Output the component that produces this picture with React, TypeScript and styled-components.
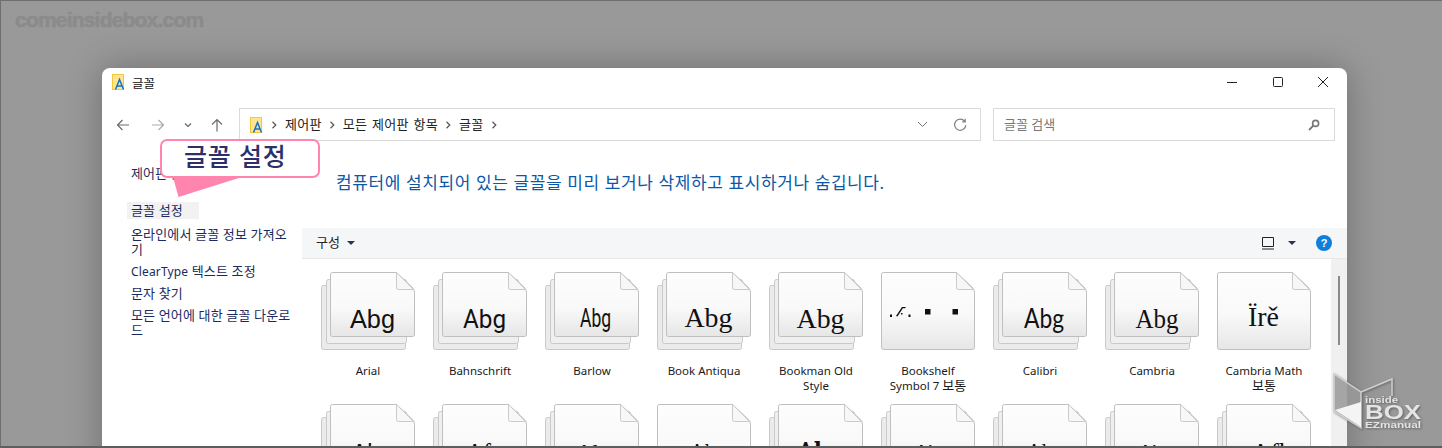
import React from 'react';
import styled, { createGlobalStyle } from 'styled-components';

const UI_FONT = `"Noto Sans", "Noto Sans CJK KR", sans-serif`;

const GlobalStyle = createGlobalStyle`
  html, body {
    margin: 0;
    padding: 0;
    background: #999;
  }
  * {
    box-sizing: border-box;
  }
`;

type Sample = {
  text: string;
  font: string;
  size: number;
  width: number;
  baseline?: number;
  center?: number;
  weight?: number;
};

type FontItem = {
  label?: string;
  stacked: boolean;
  sample: Sample | null;
};

const ARIAL = '"Liberation Sans", sans-serif';
const SERIF = '"Liberation Serif", serif';
const LIGHT = 'Roboto, sans-serif';
const DEJA_SERIF = '"DejaVu Serif", serif';
const CARLITO = 'Lato, sans-serif';

const fonts: FontItem[] = [
  { label: 'Arial', stacked: true, sample: { text: 'Abg', font: ARIAL, size: 26, width: 45 } },
  { label: 'Bahnschrift', stacked: true, sample: { text: 'Abg', font: LIGHT, size: 26, width: 43 } },
  { label: 'Barlow', stacked: true, sample: { text: 'Abg', font: LIGHT, size: 25, width: 31, center: 50.5, baseline: 55 } },
  { label: 'Book Antiqua', stacked: true, sample: { text: 'Abg', font: SERIF, size: 28, width: 48, baseline: 55 } },
  { label: 'Bookman Old Style', stacked: true, sample: { text: 'Abg', font: SERIF, size: 27, width: 48 } },
  { label: 'Bookshelf Symbol 7 보통', stacked: false, sample: null },
  { label: 'Calibri', stacked: true, sample: { text: 'Abg', font: CARLITO, size: 26, width: 40, center: 51 } },
  { label: 'Cambria', stacked: true, sample: { text: 'Abg', font: SERIF, size: 27, width: 43, center: 52 } },
  { label: 'Cambria Math 보통', stacked: false, sample: { text: 'Ïrě', font: SERIF, size: 28, width: 31, center: 46.5, baseline: 54 } },
  { stacked: true, sample: { text: 'Abg', font: ARIAL, size: 25, width: 42, baseline: 58 } },
  { stacked: true, sample: { text: 'Afg', font: SERIF, size: 25, width: 36, baseline: 57 } },
  { stacked: true, sample: { text: 'Abg', font: SERIF, size: 25, width: 42, baseline: 58 } },
  { stacked: false, sample: { text: 'Al', font: SERIF, size: 26, width: 20, baseline: 57, center: 43 } },
  { stacked: true, sample: { text: 'Abg', font: DEJA_SERIF, size: 25, width: 46, baseline: 56, weight: 700 } },
  { stacked: true, sample: { text: 'Abg', font: ARIAL, size: 24, width: 36, baseline: 58 } },
  { stacked: true, sample: { text: 'Al', font: SERIF, size: 26, width: 20, baseline: 57, center: 44 } },
  { stacked: true, sample: { text: 'Abg', font: ARIAL, size: 24, width: 36, baseline: 58 } },
  { stacked: true, sample: { text: 'Aʃl', font: SERIF, size: 27, width: 34, baseline: 58 } },
];

const Sheet: React.FC<{ x: number; y: number; w: number; h: number; fill: string }> = ({ x, y, w, h, fill }) => {
  const right = x + w;
  const bottom = y + h;
  const foldX = right - 18;
  const foldY = y + 17;
  return (
    <>
      <path
        d={`M${x + 2} ${y}H${foldX}L${right - 2} ${foldY - 2}Q${right} ${foldY} ${right} ${foldY + 3}V${bottom - 2}Q${right} ${bottom} ${right - 2} ${bottom}H${x + 2}Q${x} ${bottom} ${x} ${bottom - 2}V${y + 2}Q${x} ${y} ${x + 2} ${y}Z`}
        fill={fill}
        stroke="#bfbfbf"
      />
      <path d={`M${foldX} ${y}V${foldY - 2}Q${foldX} ${foldY} ${foldX + 2} ${foldY}H${right - 1}Z`} fill="#f7f7f7" stroke="#cacaca" />
    </>
  );
};

const FontTile: React.FC<{ item: FontItem; index: number }> = ({ item, index }) => {
  const { stacked, sample } = item;
  const gradient = `tile-fill-${index}`;
  return (
    <svg width="94" height="78" viewBox="0 0 94 78">
      <defs>
        <linearGradient id={gradient} x1="0" y1="0" x2="0" y2="1">
          <stop offset="0" stopColor="#fdfdfd" />
          <stop offset="0.55" stopColor="#f9f9f9" />
          <stop offset="1" stopColor="#e6e6e6" />
        </linearGradient>
      </defs>
      {stacked ? (
        <>
          <rect x="0.5" y="13.5" width="84" height="64" rx="2" fill="#ebebeb" stroke="#c9c9c9" />
          <rect x="5.5" y="7.5" width="80" height="64" rx="2" fill="#efefef" stroke="#c9c9c9" />
          <Sheet x={9.5} y={0.5} w={84} h={64} fill={`url(#${gradient})`} />
        </>
      ) : (
        <Sheet x={0.5} y={0.5} w={93} h={77} fill={`url(#${gradient})`} />
      )}
      {sample ? (
        <text
          x={sample.center ?? 51.5}
          y={sample.baseline ?? 56}
          textAnchor="middle"
          fontFamily={sample.font}
          fontSize={sample.size}
          fontWeight={sample.weight ?? 400}
          fill="#111"
          textLength={sample.width}
          lengthAdjust="spacingAndGlyphs"
        >
          {sample.text}
        </text>
      ) : (
        <g fill="#111">
          <rect x="9" y="42.5" width="2" height="2.5" />
          <path d="M15 44L21 35H25L24 36.2H21.8L16.5 44.6Z" />
          <rect x="20" y="41" width="1.5" height="1.5" />
          <rect x="27.5" y="42.5" width="2" height="2.5" />
          <rect x="44" y="37" width="5.5" height="5.5" />
          <rect x="71.5" y="37" width="5.5" height="5.5" />
        </g>
      )}
    </svg>
  );
};

const FolderFontIcon: React.FC = () => (
  <svg width="14" height="16" viewBox="0 0 14 16">
    <rect x="0.5" y="0.5" width="11" height="15" fill="#ffe493" stroke="#f5c83a" />
    <path d="M3.5 15.5L7.5 5.5L11.5 15.5M5 12H10" fill="none" stroke="#1574c8" strokeWidth="1.5" />
  </svg>
);

const NavArrow: React.FC<{ d: string; color: string }> = ({ d, color }) => (
  <svg width="16" height="16" viewBox="0 0 16 16">
    <path d={d} fill="none" stroke={color} strokeWidth="1.2" />
  </svg>
);

const Crumb: React.FC = () => (
  <svg width="7" height="8" viewBox="0 0 7 8">
    <path d="M1.5 0.8L4.8 4L1.5 7.2" fill="none" stroke="#555" strokeWidth="1.2" />
  </svg>
);

// hangul sits a size above latin, as the system font draws it
const Label: React.FC<{ text: string }> = ({ text }) => (
  <>
    {text.split(/([가-힣]+)/).map((part, i) =>
      /[가-힣]/.test(part) ? <Hangul key={i}>{part}</Hangul> : part,
    )}
  </>
);

const crumbs = ['제어판', '모든 제어판 항목', '글꼴'];

const sideLinks = ['온라인에서 글꼴 정보 가져오기', 'ClearType 텍스트 조정', '문자 찾기', '모든 언어에 대한 글꼴 다운로드'];

export default function App() {
  return (
    <Page>
      <GlobalStyle />
      <Watermark>comeinsidebox.com</Watermark>
      <Window>
        <TitleBar>
          <TitleGroup>
            <FolderFontIcon />
            <TitleText>글꼴</TitleText>
          </TitleGroup>
          <WindowControls>
            <ControlButton>
              <svg width="12" height="12" viewBox="0 0 12 12"><path d="M1 6.5H11" stroke="#222" strokeWidth="1" /></svg>
            </ControlButton>
            <ControlButton>
              <svg width="12" height="12" viewBox="0 0 12 12"><rect x="1.5" y="1.5" width="9" height="9" rx="1" fill="none" stroke="#222" /></svg>
            </ControlButton>
            <ControlButton>
              <svg width="12" height="12" viewBox="0 0 12 12"><path d="M1 1L11 11M11 1L1 11" stroke="#222" strokeWidth="1" /></svg>
            </ControlButton>
          </WindowControls>
        </TitleBar>

        <NavBar>
          <NavGroup>
            <NavButton $w={34}><NavArrow color="#6b6b6b" d="M14 8H2.5M7.5 3L2.5 8L7.5 13" /></NavButton>
            <NavButton $w={35}><NavArrow color="#ababab" d="M2 8H13.5M8.5 3L13.5 8L8.5 13" /></NavButton>
            <NavButton $w={26}>
              <svg width="8" height="6" viewBox="0 0 8 6"><path d="M1 1.5L4 4.5L7 1.5" fill="none" stroke="#666" strokeWidth="1.2" /></svg>
            </NavButton>
            <NavButton $w={32}><NavArrow color="#6b6b6b" d="M8 14.5V2.5M3 7.5L8 2.5L13 7.5" /></NavButton>
          </NavGroup>
          <AddressBar>
            <CrumbList>
              <FolderFontIcon />
              {crumbs.map((c) => (
                <React.Fragment key={c}>
                  <Crumb />
                  <CrumbText>{c}</CrumbText>
                </React.Fragment>
              ))}
              <Crumb />
            </CrumbList>
            <AddressActions>
              <svg width="11" height="7" viewBox="0 0 11 7"><path d="M1 1L5.5 5.5L10 1" fill="none" stroke="#777" strokeWidth="1" /></svg>
              <svg width="14" height="14" viewBox="0 0 14 14"><path d="M11.6 3.2A5.6 5.6 0 1 0 12.8 7M12.2 0.8V3.8H9.2" fill="none" stroke="#808080" strokeWidth="1.2" /></svg>
            </AddressActions>
          </AddressBar>
          <SearchBox>
            <SearchHint>글꼴 검색</SearchHint>
            <svg width="12" height="12" viewBox="0 0 12 12"><circle cx="7.6" cy="4.4" r="3" fill="none" stroke="#777" strokeWidth="1.6" /><path d="M5.4 6.6L1 11" stroke="#777" strokeWidth="1.8" /></svg>
          </SearchBox>
        </NavBar>

        <Body>
          <Sidebar>
            <SideLink $home>제어판 홈</SideLink>
            <SideLink $active>글꼴 설정</SideLink>
            {sideLinks.map((l) => (
              <SideLink key={l}><Latin text={l} /></SideLink>
            ))}
          </Sidebar>
          <Main>
            <Heading>컴퓨터에 설치되어 있는 글꼴을 미리 보거나 삭제하고 표시하거나 숨깁니다.</Heading>
            <Toolbar>
              <OrganizeButton>
                <OrganizeText>구성</OrganizeText>
                <Caret />
              </OrganizeButton>
              <ToolbarRight>
                <svg width="14" height="14" viewBox="0 0 14 14"><path d="M1.5 1.5H12.5V10.5H1.5Z M1 13H13" fill="none" stroke="#222" strokeWidth="1" /></svg>
                <Caret />
                <HelpBadge>?</HelpBadge>
              </ToolbarRight>
            </Toolbar>
            <Content>
              <FontGrid>
                {fonts.map((f, i) => (
                  <FontCell key={i}>
                    <FontTile item={f} index={i} />
                    {f.label && <FontLabel><Label text={f.label} /></FontLabel>}
                  </FontCell>
                ))}
              </FontGrid>
              <ScrollTrack>
                <ScrollThumb />
              </ScrollTrack>
            </Content>
          </Main>
        </Body>
      </Window>

      <Callout>글꼴 설정</Callout>

      <LogoMark width="92" height="58" viewBox="0 0 92 58">
        <path d="M2 2L29 20L29 56L2 39Z" fill="#a8a8a8" fillOpacity="0.75" stroke="#cfcfcf" strokeWidth="1.5" />
        <path d="M3 38L29 30L29 55Z" fill="#f4f4f4" />
        <path d="M29 20L60 7V24" fill="none" stroke="#cfcfcf" strokeWidth="1.5" />
        <LogoText x="33" y="31" fontSize="9" textLength="33" lengthAdjust="spacingAndGlyphs">inside</LogoText>
        <LogoText x="33" y="47" fontSize="20" textLength="56" lengthAdjust="spacingAndGlyphs">BOX</LogoText>
        <LogoText x="33" y="56" fontSize="8.5" textLength="56" lengthAdjust="spacingAndGlyphs">EZmanual</LogoText>
      </LogoMark>
    </Page>
  );
}

const Latin: React.FC<{ text: string }> = ({ text }) => (
  <>
    {text.split(/(ClearType)/).map((part, i) =>
      part === 'ClearType' ? <SmallLatin key={i}>{part}</SmallLatin> : part,
    )}
  </>
);

const Page = styled.div`
  position: relative;
  width: 1442px;
  height: 448px;
  overflow: hidden;
  padding: 67px 95px 0 101px;
  background: #999;
  border-top: 1px solid #6e6e6e;
  border-left: 1px solid #6e6e6e;
  border-bottom: 2px solid #5e5e5e;
  font-family: ${UI_FONT};
`;

const Watermark = styled.div`
  position: absolute;
  left: 14px;
  top: 6px;
  font: 700 21px/26px "Liberation Sans", sans-serif;
  letter-spacing: -0.8px;
  color: #8b8b8b;
  -webkit-text-stroke: 0.6px #8b8b8b;
`;

const Window = styled.div`
  width: 1245px;
  height: 460px;
  display: flex;
  flex-direction: column;
  background: #fff;
  border-radius: 8px 8px 0 0;
  box-shadow: 0 0 36px rgba(0, 0, 0, 0.28);
`;

const TitleBar = styled.div`
  height: 30px;
  flex: none;
  display: flex;
  align-items: center;
  justify-content: space-between;
  padding: 0 12px 2px 10px;
`;

const TitleGroup = styled.div`
  display: flex;
  align-items: center;
  gap: 6px;
`;

const TitleText = styled.span`
  font-size: 12.5px;
  color: #111;
`;

const WindowControls = styled.div`
  display: flex;
  align-items: center;
  gap: 33.5px;
  padding-right: 6px;
`;

const ControlButton = styled.div`
  display: flex;
  width: 12px;
  height: 12px;
`;

const NavBar = styled.div`
  flex: none;
  height: 33px;
  margin-top: 10px;
  display: flex;
  padding-right: 12px;
`;

const NavGroup = styled.div`
  width: 137px;
  padding-left: 4px;
  display: flex;
  align-items: center;
  flex: none;
`;

const NavButton = styled.div<{ $w: number }>`
  width: ${(p) => p.$w}px;
  flex: none;
  display: flex;
  align-items: center;
  justify-content: center;
`;

const AddressBar = styled.div`
  width: 742px;
  flex: none;
  margin-right: 12px;
  display: flex;
  align-items: center;
  justify-content: space-between;
  padding: 0 13px 0 10px;
  border: 1.5px solid #dadada;
`;

const CrumbList = styled.div`
  display: flex;
  align-items: center;
  gap: 7px;
`;

const CrumbText = styled.span`
  margin-bottom: 2px;
  font-size: 13px;
  letter-spacing: 0.3px;
  word-spacing: 1px;
  color: #222;
`;

const AddressActions = styled.div`
  display: flex;
  align-items: center;
  gap: 25px;
`;

const SearchBox = styled.div`
  width: 342px;
  flex: none;
  display: flex;
  align-items: center;
  justify-content: space-between;
  padding: 0 14px 0 10px;
  border: 1.5px solid #dadada;
`;

const SearchHint = styled.span`
  margin-bottom: 2px;
  font-size: 13px;
  color: #777;
`;

const Body = styled.div`
  flex: 1;
  display: flex;
  min-height: 0;
`;

const Sidebar = styled.nav`
  width: 200px;
  flex: none;
  padding: 25px 0 0 29px;
  display: flex;
  flex-direction: column;
  gap: 7px;
`;

const SideLink = styled.a<{ $active?: boolean; $home?: boolean }>`
  display: block;
  width: ${(p) => (p.$active ? '72px' : '163px')};
  word-break: break-all;
  font-size: 13px;
  line-height: 15px;
  letter-spacing: 0.15px;
  color: #1a2a5e;
  ${(p) => p.$home && 'margin-bottom: 14px;'}
  ${(p) => p.$active && 'margin-left: -4px; margin-bottom: 1px; padding: 1px 4px; background: #f2f2f2; word-break: keep-all; white-space: nowrap;'}
`;

const SmallLatin = styled.span`
  font-size: 12px;
`;

const Main = styled.div`
  flex: 1;
  min-width: 0;
  display: flex;
  flex-direction: column;
`;

const Heading = styled.h1`
  flex: none;
  height: 87px;
  margin: 0;
  padding: 31px 0 0 34px;
  font-size: 17px;
  font-weight: 400;
  line-height: 22px;
  letter-spacing: 0.6px;
  white-space: nowrap;
  color: #0b57a8;
`;

const Toolbar = styled.div`
  flex: none;
  height: 31px;
  display: flex;
  align-items: center;
  justify-content: space-between;
  padding: 0 15px 0 14px;
  background: #f5f6f7;
  border-bottom: 1px solid #e8e8e8;
`;

const OrganizeButton = styled.div`
  display: flex;
  align-items: center;
  gap: 7px;
  color: #222;
`;

const OrganizeText = styled.span`
  margin-bottom: 3px;
  font-size: 13px;
`;

const Caret = styled.span`
  width: 0;
  height: 0;
  border-left: 4px solid transparent;
  border-right: 4px solid transparent;
  border-top: 4px solid #2a3350;
`;

const ToolbarRight = styled.div`
  display: flex;
  align-items: center;
  gap: 13px;
`;

const HelpBadge = styled.span`
  width: 16px;
  height: 16px;
  margin-left: 7px;
  border-radius: 50%;
  background: #0f7fdc;
  color: #fff;
  font: 700 11px/16px "Liberation Sans", sans-serif;
  text-align: center;
`;

const Content = styled.div`
  flex: 1;
  display: flex;
  min-height: 0;
`;

const FontGrid = styled.div`
  width: 1029px;
  flex: none;
  padding: 13px 0 0 19px;
  display: grid;
  grid-template-columns: repeat(9, 94px);
  grid-auto-rows: 132px;
  column-gap: 18px;
  overflow: hidden;
`;

const FontCell = styled.div`
  display: flex;
  flex-direction: column;
  align-items: center;

  svg {
    display: block;
    flex: none;
  }
`;

const FontLabel = styled.div`
  width: 92px;
  margin-top: 13px;
  font-size: 11.5px;
  line-height: 15px;
  text-align: center;
  word-break: keep-all;
  color: #1a1a1a;
`;

const Hangul = styled.span`
  display: inline-block;
  font-size: 13px;
  line-height: 15px;
`;

const ScrollTrack = styled.div`
  width: 16px;
  flex: none;
  padding: 17px 0 0 7px;
  background: #f0f0f0;
`;

const ScrollThumb = styled.div`
  width: 2px;
  height: 69px;
  background: #8a8a8a;
`;

const Callout = styled.div`
  position: absolute;
  left: 159px;
  top: 138px;
  width: 160px;
  height: 39px;
  padding-left: 22px;
  background: #fff;
  border: 2px solid #ff85ae;
  border-radius: 7px;
  font-size: 25px;
  font-weight: 500;
  line-height: 30px;
  color: #2c2f6a;
  letter-spacing: 0.8px;

  &::after {
    content: '';
    position: absolute;
    left: 11px;
    top: 100%;
    width: 69px;
    height: 20px;
    margin-top: 1px;
    background: #ff85ae;
    clip-path: polygon(0 0, 8% 100%, 100% 0);
  }
`;

const LogoMark = styled.svg`
  position: absolute;
  left: 1331px;
  top: 371px;
  filter: drop-shadow(1px 1px 1px rgba(60, 60, 60, 0.6));
`;

const LogoText = styled.text`
  font-family: "Liberation Sans", sans-serif;
  font-weight: 700;
  fill: #e4e4e4;
`;
